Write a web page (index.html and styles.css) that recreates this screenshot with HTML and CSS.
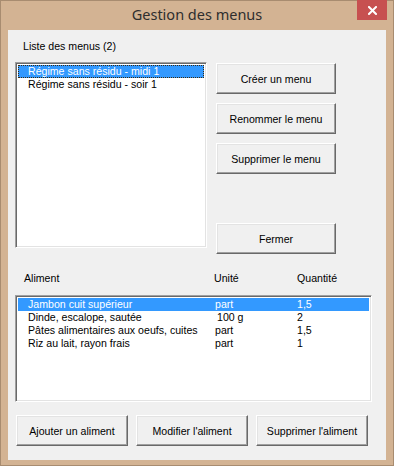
FILE: index.html
```html
<!DOCTYPE html>
<html lang="fr">
<head>
<meta charset="utf-8">
<title>Gestion des menus</title>
<link rel="stylesheet" href="styles.css">
</head>
<body>
<div class="window">
  <div class="titlebar">
    <span class="spacer"></span>
    <span class="title">Gestion des menus</span>
    <div class="close-wrap">
      <div class="close">
        <svg width="9" height="9" viewBox="0 0 9 9"><path d="M1 1 L8 8 M8 1 L1 8" stroke="#fff" stroke-width="2" stroke-linecap="square" fill="none"/></svg>
      </div>
    </div>
  </div>
  <div class="client">
    <div class="label">Liste des menus (2)</div>
    <div class="top">
      <div class="listbox menus">
        <div class="item selected focus">Régime sans résidu - midi 1</div>
        <div class="item">Régime sans résidu - soir 1</div>
      </div>
      <div class="side">
        <button class="btn wide">Créer un menu</button>
        <button class="btn wide">Renommer le menu</button>
        <button class="btn wide">Supprimer le menu</button>
        <button class="btn wide close-btn">Fermer</button>
      </div>
    </div>
    <div class="headers">
      <span>Aliment</span><span>Unité</span><span>Quantité</span>
    </div>
    <div class="listbox foods">
      <div class="row selected"><span>Jambon cuit supérieur</span><span>part</span><span>1,5</span></div>
      <div class="row"><span>Dinde, escalope, sautée</span><span class="u100">100 g</span><span>2</span></div>
      <div class="row"><span>Pâtes alimentaires aux oeufs, cuites</span><span>part</span><span>1,5</span></div>
      <div class="row"><span>Riz au lait, rayon frais</span><span>part</span><span>1</span></div>
    </div>
    <div class="bottom">
      <button class="btn small">Ajouter un aliment</button>
      <button class="btn small">Modifier l'aliment</button>
      <button class="btn small">Supprimer l'aliment</button>
    </div>
  </div>
</div>
</body>
</html>
```
FILE: styles.css
```css
html, body {
  margin: 0;
  padding: 0;
  background: #fff;
}
.window {
  width: 394px;
  height: 466px;
  box-sizing: border-box;
  background: #d3b393;
  border: 1px solid #a88c70;
  font-family: "Liberation Sans", Arial, sans-serif;
  font-size: 10.6px;
  color: #000;
}
.titlebar {
  height: 29px;
  display: grid;
  grid-template-columns: 1fr auto 1fr;
  align-items: start;
}
.title {
  font-family: "Noto Sans", "Open Sans", sans-serif;
  font-size: 14.5px;
  color: #2e2e2e;
  line-height: 29px;
  margin-top: -1px;
}
.close-wrap {
  display: flex;
  justify-content: flex-end;
  padding-right: 6px;
}
.close {
  width: 30px;
  height: 20px;
  background: #c75050;
  display: flex;
  align-items: center;
  justify-content: center;
  margin-top: -1px;
}
.client {
  margin-left: 7px;
  width: 378px;
  height: 430px;
  box-sizing: border-box;
  background: #f0f0f0;
  padding: 9px 0 0 7px;
}
.label {
  margin-left: 8px;
  line-height: 14px;
  height: 14px;
}
.top {
  display: flex;
  margin-top: 9px;
  height: 193px;
}
.listbox {
  box-sizing: border-box;
  background: #fff;
  border-top: 1px solid #a0a0a0;
  border-left: 1px solid #a0a0a0;
  border-bottom: 1px solid #fff;
  border-right: 1px solid #fff;
  box-shadow: inset 1px 1px 0 #696969, inset -1px -1px 0 #e3e3e3;
  padding: 2px 2px;
}
.menus {
  width: 192px;
  height: 186px;
  margin-right: 9px;
}
.item {
  height: 13px;
  line-height: 13px;
  padding-left: 10px;
  white-space: nowrap;
  box-sizing: border-box;
}
.selected {
  background: #3399ff;
  color: #fff;
}
.focus {
  border: 1px dotted #3a2a10;
  line-height: 11px;
  padding-left: 9px;
}
.side {
  display: flex;
  flex-direction: column;
  gap: 9px;
  padding-top: 1px;
}
.btn {
  font-family: "Liberation Sans", Arial, sans-serif;
  font-size: 10.6px;
  color: #000;
  background: #f0f0f0;
  box-sizing: border-box;
  height: 31px;
  border-top: 1px solid #fff;
  border-left: 1px solid #fff;
  border-bottom: 1px solid #696969;
  border-right: 1px solid #696969;
  box-shadow: inset -1px -1px 0 #a0a0a0, inset 1px 1px 0 #e3e3e3;
  padding: 0;
  margin: 0;
  display: flex;
  align-items: center;
  justify-content: center;
}
.wide {
  width: 120px;
}
.close-btn {
  margin-top: 40px;
}
.headers {
  display: grid;
  grid-template-columns: 190px 83px auto;
  padding-left: 9px;
  margin-top: 16px;
  line-height: 14px;
  height: 14px;
}
.foods {
  margin-top: 10px;
  width: 357px;
  height: 107px;
}
.row {
  display: grid;
  grid-template-columns: 187px 82px auto;
  height: 13px;
  line-height: 13px;
  padding-left: 10px;
  white-space: nowrap;
}
.u100 {
  padding-left: 2px;
}
.bottom {
  display: flex;
  gap: 8px;
  margin-top: 13px;
  padding-left: 1px;
}
.small {
  width: 112px;
}
```
